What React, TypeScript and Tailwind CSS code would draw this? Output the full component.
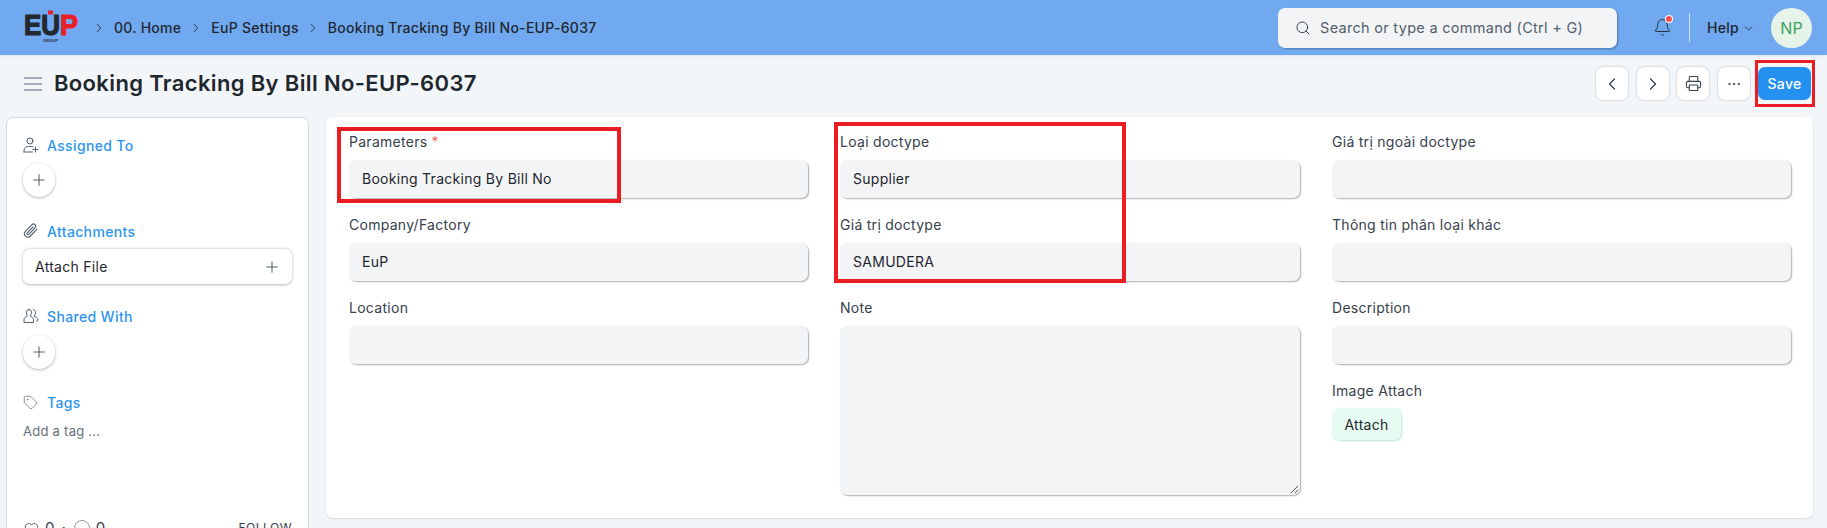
import React from "react";
import { ChevronLeft, ChevronRight, ChevronDown, Search, Bell, Printer, Ellipsis, Plus, Tag, Heart } from "lucide-react";

const inputCls = "h-[38px] w-full rounded-[7px] bg-[#f3f4f6] shadow-[1px_1px_1.5px_rgba(0,0,0,0.32)] px-[13px] pb-[2px] flex items-center text-[14px] font-[420] tracking-[0.28px] text-[#1f272e]";
const labelCls = "h-[20px] mb-[8px] text-[14px] font-[420] tracking-[0.28px] leading-[20px] text-[#36414c]";

function Field({ label, value, required }: { label: string; value?: string; required?: boolean }) {
  return (
    <div className="mb-[17px]">
      <div className={labelCls}>
        {label}
        {required && <span className="text-[#f56565] ml-[4px]">*</span>}
      </div>
      <div className={inputCls}>{value}</div>
    </div>
  );
}

function ActionBtn({ children }: { children: React.ReactNode }) {
  return (
    <button className="h-[33px] w-[32px] flex items-center justify-center rounded-[7px] bg-white text-[#36414c] shadow-[0_0_2px_rgba(0,0,0,0.3)]">
      {children}
    </button>
  );
}

function SideHead({ icon, label }: { icon: React.ReactNode; label: string }) {
  return (
    <div className="flex items-center h-[20px] text-[14px] font-medium tracking-[0.35px] text-[#2d95f0]">
      <span className="w-[24px] flex text-[#525f6b]">{icon}</span>
      {label}
    </div>
  );
}

function CirclePlus() {
  return (
    <div className="h-[34px] w-[32px] rounded-full bg-white flex items-center justify-center text-[#525f6b] shadow-[0_1px_3px_rgba(0,0,0,0.3)]">
      <Plus size={18} strokeWidth={1.4} />
    </div>
  );
}

function AssignIcon() {
  return (
    <svg width="16" height="16" viewBox="0 0 16 16" fill="none" stroke="currentColor" strokeWidth="1" strokeLinecap="round">
      <circle cx="7" cy="4" r="3" />
      <path d="M1 15v-1.5C1 11 3 9.5 5.5 9.5h3c.6 0 1.2.1 1.7.3" />
      <path d="M1 15h8.5M12.5 10v5M10 12.5h5" />
    </svg>
  );
}

function ClipIcon() {
  return (
    <svg width="16" height="16" viewBox="0 0 16 16" fill="none" stroke="currentColor" strokeWidth="1.1" strokeLinecap="round" strokeLinejoin="round">
      <path d="M14 6.2 7.4 13a3.4 3.4 0 0 1-5-4.7l6.6-6.7a2.2 2.2 0 0 1 3.2 3.1L5.8 11.3a1 1 0 0 1-1.5-1.4l5.8-6" />
    </svg>
  );
}

function SharedIcon() {
  return (
    <svg width="16" height="16" viewBox="0 0 16 16" fill="none" stroke="currentColor" strokeWidth="1" strokeLinecap="round" strokeLinejoin="round">
      <path d="M6 1.5a2.6 2.6 0 0 1 2.6 2.8c0 1.2-.5 2.2-1.1 2.9v1.3c1.6.5 3 1.2 3 3.5v2.5H1v-2.5c0-2.3 1.4-3 3-3.5V7.2C3.9 6.5 3.4 5.500 3.4 4.300A2.600 2.600 0 0 1 6 1.500Z" />
      <path d="M10.300 1.700c1.300.1 2.300 1.200 2.300 2.600 0 1.200-.5 2.200-1.100 2.900v1.300c1.800.5 3.400 1.200 3.400 3.300 0 .9-.6 1.500-1.500 1.500" />
    </svg>
  );
}

function Logo() {
  return (
    <svg width="54" height="34" viewBox="0 0 54 34" className="block">
      <text x="0" y="25" fontFamily="Liberation Sans, sans-serif" fontWeight="700" fontSize="29" textLength="36" lengthAdjust="spacingAndGlyphs" fill="#23272e" stroke="#23272e" strokeWidth="1.2">EU</text>
      <text x="36" y="25" fontFamily="Liberation Sans, sans-serif" fontWeight="700" fontSize="29" textLength="18" lengthAdjust="spacingAndGlyphs" fill="#e8202a" stroke="#e8202a" strokeWidth="1.2">P</text>
      <rect x="24" y="0.5" width="5" height="4" fill="#e8202a" />
      <text x="19" y="32" fontFamily="Liberation Sans, sans-serif" fontWeight="700" fontSize="4" textLength="15" fill="#23272e">GROUP</text>
    </svg>
  );
}

export default function App() {
  const crumb = "text-[14px] font-medium tracking-[0.28px] text-[#1f272e]";
  const sep = <ChevronRight size={14} strokeWidth={1.5} className="text-[#1f272e]" />;
  return (
    <div className="h-[528px] w-[1827px] overflow-hidden bg-[#f3f6f9]" style={{ fontFamily: "Inter, 'Noto Sans', sans-serif" }}>
      {/* navbar */}
      <header className="h-[55px] bg-[#70a9f0] flex items-center pl-[24px] pr-[15px] shadow-[0_1px_2px_rgba(0,0,0,0.08)]">
        <div className="mt-[-1px]"><Logo /></div>
        <div className="ml-[14px] flex items-center">
          {sep}
          <span className={`${crumb} ml-[8px]`}>00. Home</span>
          <span className="ml-[8px]">{sep}</span>
          <span className={`${crumb} ml-[8px]`}>EuP Settings</span>
          <span className="ml-[7px]">{sep}</span>
          <span className={`${crumb} ml-[8px]`}>Booking Tracking By Bill No-EUP-6037</span>
        </div>
        <div className="ml-auto flex items-center">
          <div className="h-[40px] w-[339px] rounded-[7px] bg-[#f3f4f6] flex items-center pl-[17px] text-[14.5px] tracking-[0.29px] text-[#525f6b] shadow-[1px_1px_2px_rgba(0,0,0,0.3)]">
            <Search size={16} strokeWidth={1.5} className="mr-[9px] text-[#36414c]" />
            Search or type a command (Ctrl + G)
          </div>
          <div className="relative ml-[36px] text-[#1f272e]">
            <Bell size={19} strokeWidth={1.2} />
            <span className="absolute right-[0px] top-[-2px] h-[6px] w-[6px] rounded-full bg-[#f8504f] ring-1 ring-white" />
          </div>
          <div className="ml-[17px] h-[29px] w-px bg-[#cfe0f5]" />
          <span className="ml-[17px] text-[14px] tracking-[0.28px] font-medium text-[#1f272e]">Help</span>
          <ChevronDown size={13} strokeWidth={1.5} className="ml-[3px] mt-[2px] text-[#1f272e]" />
          <div className="ml-[16px] h-[40px] w-[41px] rounded-full bg-[#e6f3e9] flex items-center justify-center text-[16px] text-[#3da35d]">NP</div>
        </div>
      </header>

      {/* page head */}
      <div className="h-[57px] mb-[5px] flex items-center pl-[24px] pr-[16px]">
        <div className="flex flex-col gap-[4px] w-[18px]">
          <span className="h-[2px] bg-[#a3adb8]" />
          <span className="h-[2px] bg-[#a3adb8]" />
          <span className="h-[2px] bg-[#a3adb8]" />
        </div>
        <h1 className="ml-[12px] mb-[2px] text-[22px] tracking-[0.36px] font-semibold text-[#1f272e] leading-[30px]">Booking Tracking By Bill No-EUP-6037</h1>
        <div className="ml-auto flex items-center gap-[8.5px]">
          <ActionBtn><ChevronLeft size={20} strokeWidth={1.5} /></ActionBtn>
          <ActionBtn><ChevronRight size={20} strokeWidth={1.5} /></ActionBtn>
          <ActionBtn><Printer size={17} strokeWidth={1.5} /></ActionBtn>
          <ActionBtn><Ellipsis size={16} strokeWidth={1.5} /></ActionBtn>
          <div className="relative">
            <button className="h-[33px] w-[53px] rounded-[7px] bg-[#2490ef] text-white text-[14px] tracking-[0.28px] font-medium">Save</button>
            <div className="absolute left-[-3px] top-[-7px] h-[47px] w-[60px] border-[3px] border-[#ea1c24]" />
          </div>
        </div>
      </div>

      {/* body */}
      <div className="flex pl-[6px] gap-[17px]">
        {/* sidebar */}
        <aside className="w-[303px] h-[500px] shrink-0 rounded-[7px] bg-white border border-[#d6dadd] px-[16px] pt-[17px]">
          <SideHead icon={<AssignIcon />} label="Assigned To" />
          <div className="mt-[8px]"><CirclePlus /></div>
          <div className="mt-[24px]">
            <SideHead icon={<ClipIcon />} label="Attachments" />
          </div>
          <div className="mt-[8px] h-[35px] rounded-[7px] bg-white flex items-center justify-between pl-[12px] pr-[11px] text-[14px] tracking-[0.28px] text-[#1f272e] shadow-[0_0.5px_3px_rgba(0,0,0,0.3)]">
            Attach File
            <Plus size={18} strokeWidth={1.4} className="text-[#525f6b]" />
          </div>
          <div className="mt-[22px]">
            <SideHead icon={<SharedIcon />} label="Shared With" />
          </div>
          <div className="mt-[9px]"><CirclePlus /></div>
          <div className="mt-[23px]">
            <SideHead icon={<Tag size={15} strokeWidth={1.1} />} label="Tags" />
          </div>
          <div className="mt-[9px] text-[13px] tracking-[0.26px] leading-[20px] text-[#687178]">Add a tag ...</div>
          <div className="mt-[76px] flex items-center justify-between text-[15px] text-[#36414c]">
            <div className="flex items-center">
              <Heart size={15} strokeWidth={1.2} className="ml-[1px]" />
              <span className="ml-[6px]">0</span>
              <span className="ml-[7px]">·</span>
              <span className="ml-[8px] h-[16px] w-[16px] rounded-full border border-[#8d99a6]" />
              <span className="ml-[6px]">0</span>
            </div>
            <span className="text-[12px] tracking-[0.5px]">FOLLOW</span>
          </div>
        </aside>

        {/* main */}
        <main className="relative w-[1487px] h-[401px] shrink-0 rounded-[7px] bg-white shadow-[0_1px_2px_rgba(0,0,0,0.12)] px-[23px] pt-[15px]">
          <div className="grid grid-cols-[459px_460px_459px] gap-x-[32px]">
            <div>
              <Field label="Parameters" value="Booking Tracking By Bill No" required />
              <Field label="Company/Factory" value="EuP" />
              <Field label="Location" />
            </div>
            <div>
              <Field label="Loại doctype" value="Supplier" />
              <Field label="Giá trị doctype" value="SAMUDERA" />
              <div className={labelCls}>Note</div>
              <div className="relative h-[169px] w-full rounded-[7px] bg-[#f3f4f6] shadow-[1px_1px_1.5px_rgba(0,0,0,0.32)]">
                <svg width="10" height="10" viewBox="0 0 10 10" className="absolute right-[1px] bottom-[1px] text-[#525252]">
                  <path d="M2 9 L9 2 M6 9 L9 6" stroke="currentColor" strokeWidth="1" />
                </svg>
              </div>
            </div>
            <div>
              <Field label="Giá trị ngoài doctype" />
              <Field label="Thông tin phân loại khác" />
              <Field label="Description" />
              <div className="mt-[1px] h-[20px] mb-[7px] text-[14px] font-[420] tracking-[0.28px] leading-[20px] text-[#36414c]">Image Attach</div>
              <button className="h-[32px] w-[69px] rounded-[7px] bg-[#e6fbf1] text-[14px] font-[420] tracking-[0.28px] text-[#1f272e] shadow-[1px_1px_2px_rgba(60,180,150,0.35)]">Attach</button>
            </div>
          </div>
          {/* annotation boxes */}
          <div className="absolute left-[11px] top-[10px] h-[76px] w-[284px] border-[4px] border-[#ea1c24]" />
          <div className="absolute left-[508px] top-[5px] h-[161px] w-[292px] border-[4px] border-[#ea1c24]" />
        </main>
      </div>
    </div>
  );
}
